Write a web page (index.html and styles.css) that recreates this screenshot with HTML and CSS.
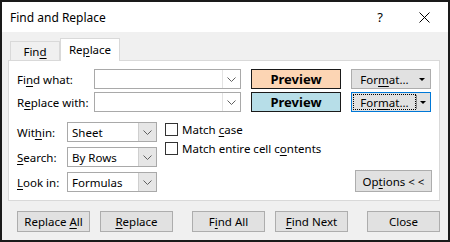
FILE: index.html
```html
<!DOCTYPE html>
<html lang="en">
<head>
    <meta charset="UTF-8">
    <title>Find and Replace</title>
    <link rel="stylesheet" href="styles.css">
</head>
<body>
    <div class="window">
        <div class="titlebar">
            <span class="title">Find and Replace</span>
            <span class="help">?</span>
            <span class="close">
                <svg width="11" height="11" viewBox="0 0 11 11"><path d="M0.5 0.5 L10.5 10.5 M10.5 0.5 L0.5 10.5" stroke="#000" stroke-width="1" fill="none"/></svg>
            </span>
        </div>
        <div class="content">
            <div class="tabs">
                <div class="tab"><span>Fin<u>d</u></span></div>
                <div class="tab active"><span>Re<u>p</u>lace</span></div>
            </div>
            <div class="panel">
                <div class="top-grid">
                    <span class="lbl"><span>Fi<u>n</u>d what:</span></span>
                    <div class="combo">
                        <span class="field"></span>
                        <span class="drop"><svg width="9" height="5" viewBox="0 0 9 5"><path d="M0.5 0.5 L4.5 4.5 L8.5 0.5" stroke="#606060" fill="none"/></svg></span>
                    </div>
                    <div class="preview orange">Preview</div>
                    <div class="btn split">
                        <span class="split-text"><span>For<u>m</u>at...</span></span>
                        <span class="tri"></span>
                    </div>

                    <span class="lbl"><span>R<u>e</u>place with:</span></span>
                    <div class="combo">
                        <span class="field"></span>
                        <span class="drop"><svg width="9" height="5" viewBox="0 0 9 5"><path d="M0.5 0.5 L4.5 4.5 L8.5 0.5" stroke="#606060" fill="none"/></svg></span>
                    </div>
                    <div class="preview blue">Preview</div>
                    <div class="btn split focused">
                        <span class="split-text"><span class="focus-rect"><span>For<u>m</u>at...</span></span></span>
                        <span class="sep"></span>
                        <span class="tri"></span>
                    </div>
                </div>

                <div class="lower">
                    <div class="opts">
                        <span class="lbl"><span>Wit<u>h</u>in:</span></span>
                        <div class="combo list">
                            <span class="field">Sheet</span>
                            <span class="drop"><svg width="9" height="5" viewBox="0 0 9 5"><path d="M0.5 0.5 L4.5 4.5 L8.5 0.5" stroke="#606060" fill="none"/></svg></span>
                        </div>
                        <span class="lbl"><span><u>S</u>earch:</span></span>
                        <div class="combo list">
                            <span class="field">By Rows</span>
                            <span class="drop"><svg width="9" height="5" viewBox="0 0 9 5"><path d="M0.5 0.5 L4.5 4.5 L8.5 0.5" stroke="#606060" fill="none"/></svg></span>
                        </div>
                        <span class="lbl"><span><u>L</u>ook in:</span></span>
                        <div class="combo list">
                            <span class="field">Formulas</span>
                            <span class="drop"><svg width="9" height="5" viewBox="0 0 9 5"><path d="M0.5 0.5 L4.5 4.5 L8.5 0.5" stroke="#606060" fill="none"/></svg></span>
                        </div>
                    </div>
                    <div class="checks">
                        <label class="check"><span class="box"></span><span>Match <u>c</u>ase</span></label>
                        <label class="check"><span class="box"></span><span>Match entire cell c<u>o</u>ntents</span></label>
                    </div>
                    <div class="btn options"><span>Op<u>t</u>ions &lt; &lt;</span></div>
                </div>
            </div>
            <div class="actions">
                <div class="btn action"><span>Replace <u>A</u>ll</span></div>
                <div class="btn action"><span><u>R</u>eplace</span></div>
                <div class="btn action wide-gap"><span>F<u>i</u>nd All</span></div>
                <div class="btn action"><span><u>F</u>ind Next</span></div>
                <div class="btn action wide-gap"><span>Close</span></div>
            </div>
        </div>
    </div>
</body>
</html>
```

FILE: styles.css
```css
body {
    margin: 0;
    padding: 0;
    background: #fff;
}
.window {
    width: 450px;
    height: 242px;
    box-sizing: border-box;
    border: 2px solid #1a1a1a;
    background: #f0f0f0;
    font-family: "Noto Sans", sans-serif;
    font-size: 11.5px;
    color: #000;
    overflow: hidden;
}
u {
    text-underline-offset: 2px;
}
.titlebar {
    height: 30px;
    background: #fff;
    display: flex;
    align-items: center;
    padding: 0 18px 0 8px;
}
.title {
    font-size: 12px;
}
.help {
    margin-left: auto;
    font-size: 13px;
    margin-right: 36px;
}
.close {
    display: flex;
}
.content {
    padding: 6px 8px 0 6px;
}
.tabs {
    display: flex;
    align-items: flex-end;
    padding-left: 2px;
    margin-bottom: -1px;
}
.tab {
    width: 50px;
    height: 20px;
    box-sizing: border-box;
    border: 1px solid #d9d9d9;
    border-bottom: none;
    text-align: center;
    line-height: 20px;
}
.tab.active {
    width: 60px;
    height: 23px;
    background: #fff;
    line-height: 22px;
    position: relative;
}
.panel {
    background: #fff;
    border: 1px solid #d9d9d9;
    padding: 8px;
}
.top-grid {
    display: grid;
    grid-template-columns: 67px 147px 90px 80px;
    grid-auto-rows: 20px;
    column-gap: 10px;
    row-gap: 3px;
}
.lbl {
    display: flex;
    align-items: center;
    white-space: nowrap;
}
.combo {
    display: flex;
    border: 1px solid #a9a9a9;
    background: #fff;
    box-sizing: border-box;
}
.field {
    flex: 1;
    padding-left: 4px;
    display: flex;
    align-items: center;
}
.drop {
    width: 17px;
    display: flex;
    align-items: center;
    justify-content: center;
    border-left: 1px solid #e3e3e3;
}
.combo.list .drop {
    background: #e6e6e6;
    border-left: 1px solid #cfcfcf;
}
.preview {
    border: 1px solid #1a1a1a;
    box-sizing: border-box;
    font-weight: bold;
    font-size: 13px;
    display: flex;
    align-items: center;
    justify-content: center;
}
.orange {
    background: #fcd5b4;
}
.blue {
    background: #b7dee8;
}
.btn {
    background: #e1e1e1;
    border: 1px solid #adadad;
    box-sizing: border-box;
    display: flex;
    align-items: center;
    justify-content: center;
    white-space: nowrap;
}
.split {
    justify-content: flex-start;
    padding: 2px;
}
.split-text {
    flex: 1;
    display: flex;
    justify-content: center;
    align-self: stretch;
    align-items: center;
}
.tri {
    width: 0;
    height: 0;
    border-left: 3px solid transparent;
    border-right: 3px solid transparent;
    border-top: 3px solid #000;
    margin: 0 3px 0 4px;
}
.focused {
    border-color: #0078d7;
}
.focus-rect {
    outline: 1px dotted #000;
    align-self: stretch;
    display: flex;
    align-items: center;
    justify-content: center;
    flex: 1;
}
.sep {
    width: 1px;
    align-self: stretch;
    background: #8c8c8c;
    margin-left: 1px;
}
.split.focused .tri {
    margin: 0 2px 0 3px;
}
.lower {
    display: flex;
    margin-top: 10px;
}
.opts {
    display: grid;
    grid-template-columns: 50px 90px;
    grid-auto-rows: 20px;
    row-gap: 5px;
}
.checks {
    display: flex;
    flex-direction: column;
    gap: 6px;
    margin-left: 8px;
    margin-top: 1px;
}
.check {
    display: flex;
    align-items: center;
    height: 13px;
    white-space: nowrap;
}
.box {
    width: 13px;
    height: 13px;
    box-sizing: border-box;
    border: 1px solid #333;
    background: #fff;
    margin-right: 4px;
}
.options {
    margin-left: auto;
    margin-right: -1px;
    align-self: flex-end;
    width: 77px;
    height: 22px;
}
.actions {
    display: flex;
    margin-top: 10px;
    padding-left: 9px;
    gap: 10px;
}
.action {
    width: 73px;
    height: 21px;
}
.wide-gap {
    margin-left: 9px;
}
```
